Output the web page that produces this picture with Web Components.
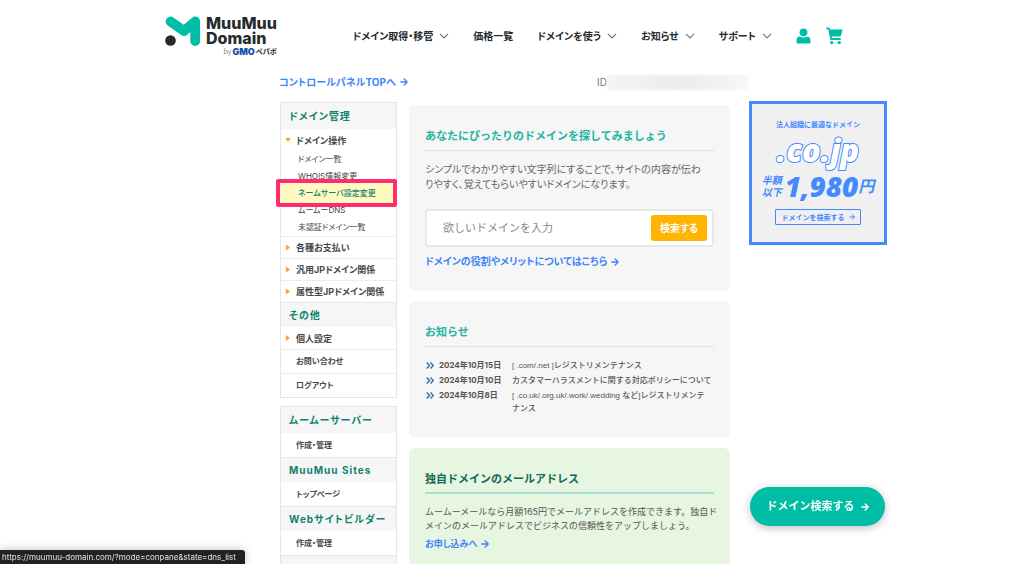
<!DOCTYPE html>
<html lang="ja">
<head>
<meta charset="utf-8">
<title>ムームードメイン コントロールパネル</title>
<style>
  :root {
    --green: #00bea5;
    --link: #3f85fb;
    --pane: #f6f6f6;
  }
  body {
    margin: 0;
    padding-right: 16px;
    background: #fff;
    color: #444;
    font: 10px/15px Inter, "Noto Sans CJK JP", sans-serif;
    overflow-x: hidden;
  }
</style>
</head>
<body>
<control-page></control-page>

<script>
const base = `
  *, *::before, *::after { box-sizing: border-box; }
  :host { display: block; }
  :host([hidden]) { display: none; }
  a { color: inherit; text-decoration: none; }
  button { font: inherit; color: inherit; border: 0; background: none; padding: 0; margin: 0; cursor: pointer; }
  h2, h3, p, ul { margin: 0; padding: 0; font: inherit; }
  ul { list-style: none; }
`;
function define(name, css, html, setup) {
  const tpl = document.createElement('template');
  tpl.innerHTML = `<style>${base}${css}</style>${html}`;
  customElements.define(name, class extends HTMLElement {
    constructor() {
      super();
      this.attachShadow({ mode: 'open' }).append(tpl.content.cloneNode(true));
    }
    connectedCallback() { if (setup) setup(this, this.shadowRoot); }
  });
}

define('arrow-icon', `
  :host { display: inline-block; width: 8px; height: 8px; }
  svg { display: block; width: 100%; height: 100%; }
`, `<svg viewBox="0 0 8 8" fill="none" stroke="currentColor" stroke-width="1.3" stroke-linecap="round" stroke-linejoin="round" aria-hidden="true"><path d="M.8 4H7.2M4.2 1l3 3-3 3"/></svg>`);

define('brand-logo', `
  a { display: grid; grid-template-columns: 36px auto; column-gap: 5px; color: #262a2c; }
  svg { display: block; width: 36px; height: 32px; }
  .name { padding-top: 1px; font: 800 16px/15px Inter, sans-serif; }
  .name span { display: block; }
  .by { grid-column: 1 / -1; justify-self: end; display: flex; align-items: center; gap: 1px; font-size: 7px; line-height: 9px; color: #888; }
  .gmo { font: 900 9px/9px Inter, sans-serif; color: #1550a8; }
  .pepabo { font-weight: 700; color: #222; }
`, `<a href="#">
  <svg viewBox="0 0 36 32" aria-hidden="true"><path d="M5.500 6.500 19 16 30.200 6.500V26" fill="none" stroke="#00bea5" stroke-width="9.800" stroke-linecap="round" stroke-linejoin="round"/><circle cx="5.500" cy="25.500" r="5.300" fill="#262a2c"/></svg>
  <span class="name"><span>MuuMuu</span><span>Domain</span></span>
  <span class="by"><span>by</span><span class="gmo">GMO</span><span class="pepabo">ペパボ</span></span>
</a>`);

define('nav-item', `
  a, button { display: flex; align-items: center; gap: 6px; color: #262a2c; font-weight: 700; font-size: 10px; line-height: 16px; white-space: nowrap; font-feature-settings: "palt"; }
  svg { width: 10px; height: 6px; }
`, ``, (el, root) => {
  const menu = el.hasAttribute('menu');
  const item = document.createElement(menu ? 'button' : 'a');
  if (menu) item.type = 'button'; else item.href = '#';
  item.innerHTML = '<slot></slot>' + (menu ? '<svg viewBox="0 0 10 6" fill="none" stroke="#777" stroke-width="1.2" aria-hidden="true"><path d="M1 .8 5 4.800 9 .8"/></svg>' : '');
  root.append(item);
});

define('site-header', `
  header { display: flex; align-items: flex-start; max-width: 678px; height: 72px; margin: 0 auto; }
  brand-logo { margin-top: 15px; }
  nav { display: flex; align-items: center; gap: 24px; height: 72px; margin-left: auto; }
  .tools { display: flex; align-items: center; gap: 15px; }
  .tools a { display: block; }
  svg { display: block; fill: var(--green); }
`, `<header>
  <brand-logo></brand-logo>
  <nav aria-label="メイン">
    <nav-item menu>ドメイン取得・移管</nav-item>
    <nav-item>価格一覧</nav-item>
    <nav-item menu>ドメインを使う</nav-item>
    <nav-item menu>お知らせ</nav-item>
    <nav-item menu>サポート</nav-item>
    <div class="tools">
      <a href="#" aria-label="アカウント"><svg width="15" height="16" viewBox="0 0 15 16"><circle cx="7.500" cy="4.300" r="3.900"/><path d="M3.300 8.600q4.200 2 8.400 0Q14.500 9.300 14.500 13v1.300q0 1.200-1.200 1.200H1.700Q.5 15.500.5 14.300V13Q.5 9.300 3.300 8.600z"/></svg></a>
      <a href="#" aria-label="カート"><svg width="17" height="18" viewBox="0 0 17 18"><path d="M.3.600h2.600q.7 0 .9.700l.3 1.300h12.600l-2 6.900H5.700l.3 1.600h8.800v1.900H5.100q-.6 0-.7-.6L2.200 2.300H.3z"/><circle cx="5.700" cy="15.600" r="1.700"/><circle cx="13.200" cy="15.600" r="1.700"/></svg></a>
    </div>
  </nav>
</header>`);

define('menu-group', `
  h2 { height: 25px; padding: 0 8px; background: var(--pane); color: #0e8270; font-size: 10px; font-weight: 700; line-height: 25px; letter-spacing: 1px; font-feature-settings: "palt"; white-space: nowrap; }
  :host([ruled]) h2 { border-top: 1px solid #e6e6e6; }
`, `<h2></h2><slot></slot>`, (el, root) => { root.querySelector('h2').textContent = el.getAttribute('label'); });

define('menu-row', `
  a { display: flex; align-items: center; height: 22px; padding-left: 4px; border-top: 1px solid #ececec; font-size: 9px; font-weight: 700; color: #484848; font-feature-settings: "palt"; white-space: nowrap; }
  :host([tall]) a { height: 24px; font-size: 8px; }
  :host([first]) a { border-top: 0; }
  i { width: 6px; height: 6px; margin-right: 5px; }
  :host([mark]) i { background: #f7a52c; clip-path: polygon(15% 0, 85% 50%, 15% 100%); }
  :host([mark="open"]) i { clip-path: polygon(0 15%, 100% 15%, 50% 85%); }
`, `<a href="#"><i></i><slot></slot></a>`);

define('menu-sub', `
  a { position: relative; display: block; height: 17px; padding-left: 17px; font-size: 8px; line-height: 17px; color: #444; font-feature-settings: "palt"; white-space: nowrap; }
  :host([current]) { position: relative; z-index: 1; }
  :host([current]) a { color: #0e8270; font-weight: 500; }
  :host([current]) a::before { content: ""; position: absolute; z-index: -1; inset: -6px -1px -5px -5px; border: 4px solid #ff2d70; border-radius: 2px; background: #fffac2; }
`, `<a href="#"><slot></slot></a>`);

define('side-menu', `
  .box { padding-top: 1px; border: 1px solid #e6e6e6; background: linear-gradient(var(--pane) 2px, #fff 2px); }
  .box + .box { margin-top: 8px; }
`, `<nav aria-label="コントロールパネル">
  <div class="box">
    <menu-group label="ドメイン管理">
      <menu-row first mark="open">ドメイン操作</menu-row>
      <menu-sub>ドメイン一覧</menu-sub>
      <menu-sub>WHOIS情報変更</menu-sub>
      <menu-sub current>ネームサーバ設定変更</menu-sub>
      <menu-sub>ムームーDNS</menu-sub>
      <menu-sub>未認証ドメイン一覧</menu-sub>
      <menu-row mark="shut">各種お支払い</menu-row>
      <menu-row mark="shut">汎用JPドメイン関係</menu-row>
      <menu-row mark="shut">属性型JPドメイン関係</menu-row>
    </menu-group>
    <menu-group ruled label="その他">
      <menu-row first mark="shut">個人設定</menu-row>
      <menu-row tall>お問い合わせ</menu-row>
      <menu-row tall>ログアウト</menu-row>
    </menu-group>
  </div>
  <div class="box">
    <menu-group label="ムームーサーバー"><menu-row first tall>作成・管理</menu-row></menu-group>
    <menu-group ruled label="MuuMuu Sites"><menu-row first tall>トップページ</menu-row></menu-group>
    <menu-group ruled label="Webサイトビルダー"><menu-row first tall>作成・管理</menu-row></menu-group>
    <menu-group ruled label=""></menu-group>
  </div>
</nav>`);

define('info-panel', `
  :host { padding: 23px 16px 22px; border-radius: 6px; background: var(--pane); }
  h2 { padding-bottom: 6px; margin-bottom: 11px; border-bottom: 1px solid #e0e0e0; color: #1fb5a0; font-size: 11px; font-weight: 700; line-height: 16px; white-space: nowrap; }
  :host([tone="mint"]) { background: #e7f6e1; }
  :host([tone="mint"]) h2 { color: #0b6b5a; border-bottom-color: #a8ddd3; border-bottom-width: 2px; padding-bottom: 5px; }
`, `<h2></h2><slot></slot>`, (el, root) => { root.querySelector('h2').textContent = el.getAttribute('label'); });

define('more-link', `
  a { display: inline-flex; align-items: center; gap: 4px; color: var(--link); font-weight: 700; line-height: 15px; white-space: nowrap; font-feature-settings: "palt"; }
`, `<a href="#"><slot></slot><arrow-icon></arrow-icon></a>`);

define('domain-search', `
  form { display: flex; align-items: center; height: 38px; padding: 0 5px 0 16px; border: 2px solid #e9e9e9; border-radius: 4px; background: #fff; }
  input { flex: 1; min-width: 0; padding: 0; border: 0; outline: 0; background: none; font: inherit; font-size: 11px; color: #444; }
  input::placeholder { color: #8a8a8a; opacity: 1; }
  button { width: 56px; height: 26px; border-radius: 3px; background: #ffb400; color: #fff; font-weight: 700; font-feature-settings: "palt"; }
`, `<form><input type="text" aria-label="ドメイン名" placeholder="欲しいドメインを入力"><button type="button">検索する</button></form>`);

define('notice-item', `
  a { display: grid; grid-template-columns: 14px 73px minmax(0, 1fr); padding: 1px 0; font-size: 8px; line-height: 13px; font-weight: 500; color: #555; white-space: nowrap; }
  svg { width: 8px; height: 7px; margin: 3px 0 0 1px; }
  time { font-weight: 700; }
  .text { font-family: "Liberation Sans", "Noto Sans CJK JP", sans-serif; }
`, `<a href="#"><svg viewBox="0 0 8 7" fill="none" stroke="#2b76b5" stroke-width="1.500" aria-hidden="true"><path d="M.7.500 3.500 3.500.7 6.500M4.500.500 7.300 3.500 4.500 6.500"/></svg><time></time><span class="text"><slot></slot></span></a>`,
  (el, root) => { root.querySelector('time').textContent = el.getAttribute('date'); });

define('promo-banner', `
  a { display: flex; flex-direction: column; align-items: center; height: 144px; padding-top: 15px; border: 3px solid #448aff; background: #f0f0f0; color: #448aff; font-weight: 700; white-space: nowrap; }
  .lead { font-size: 7px; line-height: 12px; }
  .tld { font: italic 800 31px/38px "Open Sans", sans-serif; color: #fff; -webkit-text-stroke: 2px #448aff; paint-order: stroke fill; }
  .price { display: flex; align-items: center; height: 34px; font-style: italic; }
  .half { margin-right: 3px; font-size: 10px; line-height: 12px; }
  .half span { display: block; }
  .num { font: italic 800 28px/34px "Open Sans", sans-serif; }
  .yen { font-size: 16px; line-height: 30px; }
  .go { display: flex; align-items: center; justify-content: center; gap: 4px; width: 86px; height: 16px; margin-top: 6px; border: 1px solid; border-radius: 1px; font-size: 7px; }
  arrow-icon { width: 6px; height: 6px; }
`, `<a href="#">
  <span class="lead">法人組織に最適なドメイン</span>
  <span class="tld">.co.jp</span>
  <span class="price"><span class="half"><span>半額</span><span>以下</span></span><span class="num">1,980</span><span class="yen">円</span></span>
  <span class="go">ドメインを検索する<arrow-icon></arrow-icon></span>
</a>`);

define('float-button', `
  :host { position: fixed; right: 139px; bottom: 38px; z-index: 5; }
  button { display: flex; align-items: center; justify-content: center; gap: 6px; width: 135px; height: 39px; border-radius: 20px; background: var(--green); color: #fff; font-size: 11px; font-weight: 700; box-shadow: 0 2px 8px rgba(0,0,0,.25); white-space: nowrap; }
`, `<button type="button"><slot></slot><arrow-icon></arrow-icon></button>`);

define('status-bubble', `
  :host { position: fixed; left: 0; bottom: 0; z-index: 6; padding: 0 9px 0 2px; border-radius: 0 3px 0 0; background: #202322; color: #e4e4e4; font-size: 8px; line-height: 14px; box-shadow: 0 0 8px rgba(0,0,0,.25); white-space: nowrap; }
`, `<slot></slot>`);

define('control-page', `
  .top { display: flex; justify-content: space-between; align-items: center; max-width: 470px; height: 20px; padding-left: calc(50% - 225px); box-sizing: content-box; font-size: 10px; }
  .id { display: flex; align-items: center; color: #777; }
  .mask { width: 142px; height: 15px; background: linear-gradient(90deg, #f4f4f4, #ececec 50%, #f2f2f2 80%, #f8f8f8); filter: blur(1px); }
  .cols { display: grid; grid-template-columns: 117px 333px 138px; align-items: start; padding: 9px 0 0 calc(50% - 224px); height: calc(100vh - 92px); overflow: hidden; }
  side-menu { margin-top: 1px; }
  main { display: grid; grid-template-columns: minmax(0, 1fr); gap: 10px; margin: 4px 0 0 12px; }
  promo-banner { margin-left: 19px; width: 138px; }
  p { color: #666; font-feature-settings: "palt"; white-space: nowrap; }
  domain-search { margin: 17px 0 7px; }
  .mail { margin-bottom: 3px; color: #555; font-size: 9px; line-height: 14px; font-feature-settings: normal; }
  .apply { font-size: 9px; }
`, `<site-header></site-header>
<div class="top"><more-link>コントロールパネルTOPへ</more-link><span class="id">ID<span class="mask"></span></span></div>
<div class="cols">
  <side-menu></side-menu>
  <main>
    <info-panel label="あなたにぴったりのドメインを探してみましょう">
      <p>シンプルでわかりやすい文字列にすることで、サイトの内容が伝わ<br>りやすく、覚えてもらいやすいドメインになります。</p>
      <domain-search></domain-search>
      <more-link>ドメインの役割やメリットについてはこちら</more-link>
    </info-panel>
    <info-panel label="お知らせ">
      <notice-item date="2024年10月15日">[ .com/.net ]レジストリメンテナンス</notice-item>
      <notice-item date="2024年10月10日">カスタマーハラスメントに関する対応ポリシーについて</notice-item>
      <notice-item date="2024年10月8日">[ .co.uk/.org.uk/.work/.wedding など]レジストリメンテ<br>ナンス</notice-item>
    </info-panel>
    <info-panel tone="mint" label="独自ドメインのメールアドレス">
      <p class="mail">ムームーメールなら月額165円でメールアドレスを作成できます。独自ド<br>メインのメールアドレスでビジネスの信頼性をアップしましょう。</p>
      <more-link class="apply">お申し込みへ</more-link>
    </info-panel>
  </main>
  <promo-banner></promo-banner>
</div>
<float-button>ドメイン検索する</float-button>
<status-bubble>https://muumuu-domain.com/?mode=conpane&amp;state=dns_list</status-bubble>`);
</script>
</body>
</html>
